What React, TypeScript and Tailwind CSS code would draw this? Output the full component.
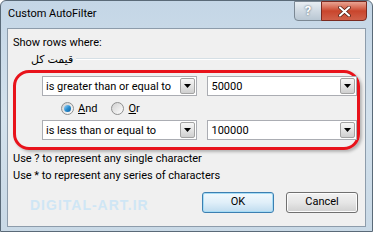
import React from "react";

function Combo({ value, width }: { value: string; width: string }) {
  return (
    <div className={`flex h-[20px] ${width} items-stretch border border-[#abadb3] bg-white`}>
      <div className="flex flex-1 items-center whitespace-nowrap pl-[3px] text-[11px] leading-none text-black">{value}</div>
      <div className="m-[1px] flex w-[15px] items-center justify-center rounded-[2px] border border-[#a3a3a3] bg-gradient-to-b from-[#f6f6f6] via-[#e4e4e4] to-[#cfcfcf]">
        <svg width="7" height="4" viewBox="0 0 7 4">
          <path d="M0 0H7L3.5 4Z" fill="#000" />
        </svg>
      </div>
    </div>
  );
}

function Radio({ checked, label }: { checked?: boolean; label: React.ReactNode }) {
  return (
    <div className="flex items-center gap-[4px]">
      <div className="flex h-[13px] w-[13px] items-center justify-center rounded-full border border-[#8e8f8f] bg-gradient-to-br from-[#d0d0d0] to-[#ffffff]">
        {checked && <div className="h-[7px] w-[7px] rounded-full bg-gradient-to-br from-[#9fd8f9] via-[#2a8fd0] to-[#0d5ea0]" />}
      </div>
      <span className="text-[11px] leading-none text-black">{label}</span>
    </div>
  );
}

export default function App() {
  return (
    <div className="relative flex h-[232px] w-[373px] flex-col overflow-hidden rounded-t-[6px] border border-[#5a6a78] bg-gradient-to-b from-[#c4d6e6] via-[#d3e1ec] to-[#c9d9e6] font-['Roboto',sans-serif]">
      {/* title bar */}
      <div className="flex h-[27px] shrink-0 items-center justify-between pl-[7px] pr-[5px]">
        <span className="text-[11px] text-black">Custom AutoFilter</span>
        <div className="flex self-start">
          <div className="flex h-[20px] w-[28px] items-center justify-center rounded-bl-[4px] border border-[#7b8894] bg-gradient-to-b from-[#e8eef3] via-[#cfd9e2] to-[#b9c7d3] text-[13px] font-bold text-white [text-shadow:0_0_2px_#3a4a5a]">
            ?
          </div>
          <div className="-ml-px flex h-[20px] w-[46px] items-center justify-center rounded-br-[4px] border border-[#7a2a20] bg-gradient-to-b from-[#e8a493] via-[#c9452c] to-[#d0614a]">
            <svg width="13" height="11" viewBox="0 0 13 11">
              <path d="M2 1.5L11 9.5M11 1.5L2 9.5" stroke="#4a1a10" strokeWidth="3.6" strokeLinecap="round" />
              <path d="M2 1.5L11 9.5M11 1.5L2 9.5" stroke="#fff" strokeWidth="2.2" strokeLinecap="round" />
            </svg>
          </div>
        </div>
      </div>

      {/* client area */}
      <div className="mx-[6px] mb-[4px] flex flex-1 flex-col border border-[#8d9cab] bg-[#f0f0f0] px-[5px] pt-[6px]">
        <div className="text-[11px] leading-[16px] text-black">Show rows where:</div>
        <div className="mt-[1px] flex items-center gap-[3px] pl-[18px]">
          <span dir="rtl" className="font-['Noto_Sans','DejaVu_Sans',sans-serif] text-[11px] leading-[13px] text-black">
            قیمت کل
          </span>
          <div className="h-0 flex-1 border-t border-b border-t-[#d5dfe5] border-b-white" />
        </div>

        {/* red highlight */}
        <div className="mt-[5px] flex h-[80px] flex-col rounded-[16px] border-[3px] border-[#e8131b] pl-[26px] pt-[3px] shadow-[2px_2px_3px_rgba(0,0,0,0.25)]">
          <div className="flex gap-[10px]">
            <Combo value="is greater than or equal to" width="w-[157px]" />
            <Combo value="50000" width="w-[151px]" />
          </div>
          <div className="flex h-[24px] items-center gap-[14px] pl-[19px]">
            <Radio checked label={<><u>A</u>nd</>} />
            <Radio label={<><u>O</u>r</>} />
          </div>
          <div className="flex gap-[10px]">
            <Combo value="is less than or equal to" width="w-[157px]" />
            <Combo value="100000" width="w-[151px]" />
          </div>
        </div>

        <div className="text-[11px] leading-[17px] text-black">Use ? to represent any single character</div>
        <div className="text-[11px] leading-[17px] text-black">Use * to represent any series of characters</div>

        {/* buttons */}
        <div className="relative mt-[8px] flex justify-end gap-[12px] pr-[2px]">
          <span className="absolute left-[17px] top-[3px] font-['Liberation_Sans',sans-serif] text-[14px] font-bold tracking-[1px] text-[#cfe6f5]">
            DIGITAL-ART.IR
          </span>
          <div className="relative flex h-[21px] w-[72px] items-center justify-center rounded-[3px] border border-[#3c7fb1] bg-gradient-to-b from-[#f2f9fd] via-[#e0eff9] to-[#bfdcef] text-[11px] text-black shadow-[inset_0_0_0_1px_#a6dcf5]">
            OK
          </div>
          <div className="relative flex h-[21px] w-[72px] items-center justify-center rounded-[3px] border border-[#707070] bg-gradient-to-b from-[#f2f2f2] via-[#e6e6e6] to-[#d0d0d0] text-[11px] text-black shadow-[inset_0_0_0_1px_#fcfcfc]">
            Cancel
          </div>
        </div>
      </div>
    </div>
  );
}
